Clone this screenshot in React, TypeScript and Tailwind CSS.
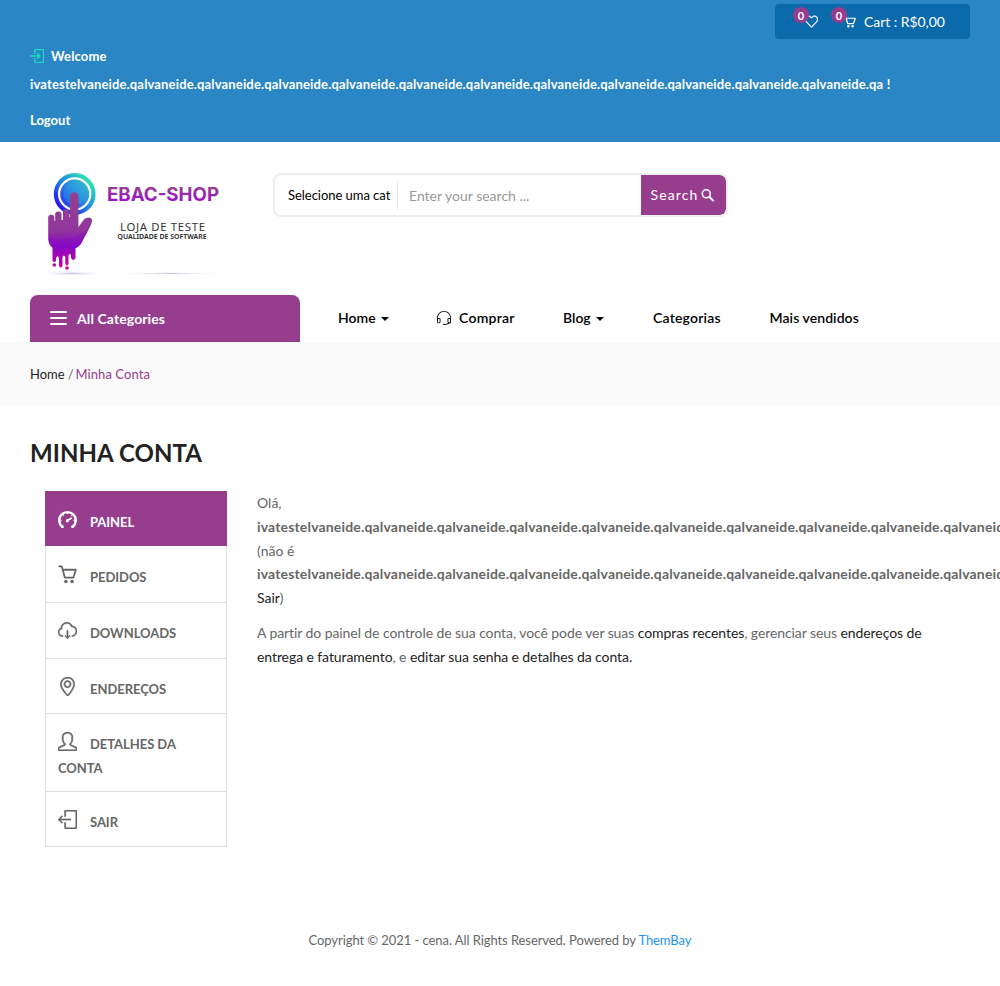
import React from "react";
import { SlLogin, SlLogout, SlHeart, SlUser, SlLocationPin, SlCloudDownload, SlEarphonesAlt } from "react-icons/sl";

const userName = "ivatestelvaneide.qa" + "lvaneide.qa".repeat(11);

function CartIcon({ className }: { className: string }) {
  return (
    <svg viewBox="0 0 20 20" className={className} fill="none" stroke="currentColor" strokeWidth="1.9" strokeLinejoin="round">
      <path d="M0.5 1.5H4L7.2 13.2H16.2L18.8 5H5" />
      <circle cx="8.3" cy="17.4" r="1.9" fill="currentColor" stroke="none" />
      <circle cx="14.8" cy="17.4" r="1.9" fill="currentColor" stroke="none" />
    </svg>
  );
}

function SearchIcon({ className }: { className: string }) {
  return (
    <svg viewBox="0 0 16 16" className={className} fill="none" stroke="currentColor">
      <circle cx="6.3" cy="6.8" r="4" strokeWidth="1.6" />
      <path d="M9.3 9.8L13.6 14.1" strokeWidth="2" />
    </svg>
  );
}

function GaugeIcon({ className }: { className: string }) {
  return (
    <svg viewBox="0 0 20 20" className={className} fill="none" stroke="currentColor" strokeWidth="2.6">
      <path d="M6 17.6H4.4A8.7 8.7 0 1 1 15.6 17.6H14" />
      <path d="M9.8 11.2L14 8.6" strokeWidth="1.8" strokeLinecap="round" />
      <circle cx="9.8" cy="11.2" r="1.6" fill="currentColor" stroke="none" />
      <path d="M10 2V4.2M4.6 4.9L5.8 6.1M15.4 4.9L14.2 6.1M2 10.8H4M18 10.8H16" strokeWidth="1.2" />
    </svg>
  );
}

function Logo() {
  return (
    <svg viewBox="0 0 230 130" className="h-[130px] w-[230px]">
      <defs>
        <linearGradient id="ring" x1="0" y1="1" x2="1" y2="0">
          <stop offset="0.1" stopColor="#2a10f5" />
          <stop offset="0.5" stopColor="#1c88e0" />
          <stop offset="0.9" stopColor="#2ee6b4" />
        </linearGradient>
        <linearGradient id="disc" x1="0" y1="1" x2="1" y2="0">
          <stop offset="0" stopColor="#2626f0" />
          <stop offset="0.55" stopColor="#2c8fdc" />
          <stop offset="1" stopColor="#35c7c5" />
        </linearGradient>
        <linearGradient id="hand" x1="0" y1="0" x2="0" y2="1">
          <stop offset="0" stopColor="#95408f" />
          <stop offset="0.5" stopColor="#91369c" />
          <stop offset="0.72" stopColor="#8609c2" />
          <stop offset="1" stopColor="#ce00a0" />
        </linearGradient>
        <linearGradient id="name" x1="0" y1="0" x2="0" y2="1">
          <stop offset="0.2" stopColor="#973c91" />
          <stop offset="0.85" stopColor="#9a0fd0" />
        </linearGradient>
        <radialGradient id="shade">
          <stop offset="0" stopColor="#c3c3e6" />
          <stop offset="1" stopColor="#fff" stopOpacity="0" />
        </radialGradient>
      </defs>
      <ellipse cx="52" cy="113.5" rx="34" ry="2.5" fill="url(#shade)" />
      <ellipse cx="150" cy="113.5" rx="59" ry="1.4" fill="url(#shade)" />
      <circle cx="54.7" cy="34" r="18.8" fill="none" stroke="url(#ring)" strokeWidth="4.2" />
      <circle cx="54.7" cy="34" r="14.5" fill="url(#disc)" />
      <circle cx="54.7" cy="34" r="11" fill="#29a9e8" opacity="0.3" />
      <path
        fill="url(#hand)"
        d="M50 36.5A4.2 4.2 0 0 1 58.4 36.5V67L63.5 60C66 56.5 73 56.5 72 61.5C70.5 67 66 74 62 82C60.5 85.5 57 88 55.5 88V98Q53.3 102 51 98V95Q49.5 93 48.5 95V104Q47 107 45.3 104V97Q43.8 94 42.5 97V106Q40.8 109 39 106V98Q37.5 94.5 36 98V101Q34.3 103 32.5 101V88Q28.2 84 28.2 79V58A3 3 0 0 1 34.4 57.5V61H35.2V55A3 3 0 0 1 41.5 54.5V60H43V53A3 3 0 0 1 49.4 52V57H50Z"
      />
      <path d="M71.5 62C66 77 47 83 29 78Q29 84 35 88H55.5C61 86 67 73 71.5 62Z" fill="#8505c5" opacity="0.35" />
      <circle cx="34.3" cy="105" r="1.8" fill="#b300a9" />
      <circle cx="47" cy="108" r="1.8" fill="#ce00a0" />
      <text x="87" y="41.3" fontFamily="Inter" fontSize="18.6" fontWeight="700" fill="url(#name)" textLength="112" lengthAdjust="spacingAndGlyphs">EBAC-SHOP</text>
      <text x="100" y="71.3" fontFamily="Noto Sans" fontSize="11.4" fill="#333" textLength="85" lengthAdjust="spacing">LOJA DE TESTE</text>
      <text x="97.5" y="79.3" fontFamily="Noto Sans" fontSize="6.2" fontWeight="600" fill="#222" textLength="89" lengthAdjust="spacingAndGlyphs">QUALIDADE DE SOFTWARE</text>
    </svg>
  );
}

const accountLinks = [
  { label: "PAINEL", Icon: GaugeIcon, box: "h-[55px] pt-[19px] bg-[#963d8e] text-white border-[#963d8e]" },
  { label: "PEDIDOS", Icon: CartIcon, box: "h-[57px] pt-[19px] text-[#666] border-[#dfdfdf]" },
  { label: "DOWNLOADS", Icon: SlCloudDownload, box: "h-[56px] pt-[18px] text-[#666] border-[#dfdfdf]" },
  { label: "ENDEREÇOS", Icon: SlLocationPin, box: "h-[55px] pt-[18px] text-[#666] border-[#dfdfdf]" },
  { label: "DETALHES DA CONTA", Icon: SlUser, box: "h-[78px] pt-[18px] pr-5 text-[#666] border-[#dfdfdf]" },
  { label: "SAIR", Icon: SlLogout, box: "h-[55px] pt-[18px] text-[#666] border-[#dfdfdf]" },
];

function Caret() {
  return <span className="ml-[5px] mt-[2px] inline-block border-x-4 border-t-4 border-x-transparent border-t-black" />;
}

function Badge() {
  return (
    <span className="absolute -left-[12px] -top-[8px] flex h-4 w-4 items-center justify-center rounded-full bg-[#963d8e] text-[11px] font-bold leading-none">0</span>
  );
}

export default function App() {
  return (
    <div className="h-[986px] w-[1000px] overflow-hidden bg-white font-['Lato',sans-serif] text-sm leading-[23.8px] text-[#666]">
      <header className="h-[142px] bg-[#2a86c4] px-[30px] pt-1 text-white">
        <div className="ml-auto flex h-[35px] w-[195px] items-center rounded bg-[#0b6aab] pl-[30px]">
          <span className="relative flex w-[38px]">
            <SlHeart className="h-[13px] w-[13px] stroke-current [stroke-width:40]" />
            <Badge />
          </span>
          <span className="relative flex">
            <CartIcon className="h-[13px] w-[13px]" />
            <Badge />
          </span>
          <span className="ml-[8px] whitespace-nowrap tracking-[-0.05px]">Cart : R$0,00</span>
        </div>
        <div className="mt-[3px] text-[13px] font-bold leading-7">
          <div className="flex items-center tracking-[0.16px]">
            <SlLogin className="mr-[7px] h-[14px] w-[14px] stroke-current text-[#1de4bd] [stroke-width:30]" />
            Welcome
          </div>
          <div className="whitespace-nowrap tracking-[0.156px]">{userName} !</div>
          <div className="mt-2">Logout</div>
        </div>
      </header>

      <section className="flex h-[153px]">
        <div className="ml-5 mt-[18px] h-[130px] w-[230px]">
          <Logo />
        </div>
        <form className="ml-[23px] mt-[31px] flex h-[44px] w-[455px] items-center overflow-hidden rounded-lg border-2 border-[#eee]">
          <div className="flex h-[30px] w-[123px] items-center whitespace-nowrap border-r border-[#e8e8e8] pl-[13px] pt-[2px] text-[13px] tracking-[-0.04px] text-black">Selecione uma cat</div>
          <div className="flex-1 pl-[11px] pt-px text-[#999]">Enter your search ...</div>
          <div className="flex h-[40px] w-[85px] items-center justify-center gap-[2px] rounded-r-md bg-[#963d8e] tracking-[1.1px] text-white">
            Search
            <SearchIcon className="h-4 w-4" />
          </div>
        </form>
      </section>

      <nav className="flex h-12 px-[30px] font-bold text-black">
        <div className="flex h-[47px] w-[270px] items-center rounded-t-[8px] bg-[#963d8e] pl-[20px] tracking-[0.1px] text-white">
          <span className="mr-[10px] mb-[2px] flex w-[17px] flex-col gap-1">
            <span className="h-[2px] rounded bg-white" />
            <span className="h-[2px] rounded bg-white" />
            <span className="h-[2px] rounded bg-white" />
          </span>
          All Categories
        </div>
        <div className="flex h-[46px] items-center whitespace-nowrap pl-[38px] font-semibold">
          <span className="flex w-[99px] items-center">Home<Caret /></span>
          <span className="flex w-[126px] items-center tracking-[0.25px]"><SlEarphonesAlt className="mr-2 h-[14px] w-[14px]" />Comprar</span>
          <span className="flex w-[90px] items-center">Blog<Caret /></span>
          <span className="w-[116.5px] tracking-[0.2px]">Categorias</span>
          <span className="tracking-[0.07px]">Mais vendidos</span>
        </div>
      </nav>

      <div className="flex h-[62px] items-center bg-[#fafafa] px-[30px] pt-px text-[13px] text-[#666]">
        <span className="text-[#222]">Home</span>
        <span className="pl-[3px] pr-[2px]">/</span>
        <span className="tracking-[0.07px] text-[#963d8e]">Minha Conta</span>
      </div>

      <main className="h-[515px] px-[30px] pt-[33px]">
        <h1 className="text-[24px] font-bold leading-[30px] tracking-[0.08px] text-[#222]">MINHA CONTA</h1>
        <div className="mt-[23px] flex pl-[15px]">
          <ul className="w-[182px] shrink-0">
            {accountLinks.map(({ label, Icon, box }) => (
              <li key={label} className={`border-x border-b pl-3 text-[13px] font-bold tracking-[-0.05px] ${box}`}>
                <Icon className={`mr-[13px] inline-block h-[19px] w-[19px] align-[-2px] ${Icon === CartIcon || Icon === GaugeIcon ? "" : "stroke-current [stroke-width:30]"}`} />
                {label}
              </li>
            ))}
          </ul>
          <div className="ml-[30px] w-[698px] shrink-0">
            <p>
              Olá,
              <br />
              <strong className="whitespace-nowrap tracking-[0.165px]">{userName}</strong>
              <br />
              (não é
              <br />
              <strong className="whitespace-nowrap tracking-[0.165px]">{userName}</strong>
              <br />
              <a className="text-[#222]">Sair</a>)
            </p>
            <p className="mt-[11px] tracking-[-0.08px]">
              A partir do painel de controle de sua conta, você pode ver suas <a className="text-[#222]">compras recentes</a>, gerenciar seus{" "}
              <a className="text-[#222]">endereços de<br />entrega e faturamento</a>, e <a className="text-[#222]">editar sua senha e detalhes da conta.</a>
            </p>
          </div>
        </div>
      </main>

      <footer className="pt-[9px] text-center text-[13px] tracking-[-0.07px]">
        Copyright © 2021 - cena. All Rights Reserved. Powered by <a className="text-[#1e96f0]">ThemBay</a>
      </footer>
    </div>
  );
}
